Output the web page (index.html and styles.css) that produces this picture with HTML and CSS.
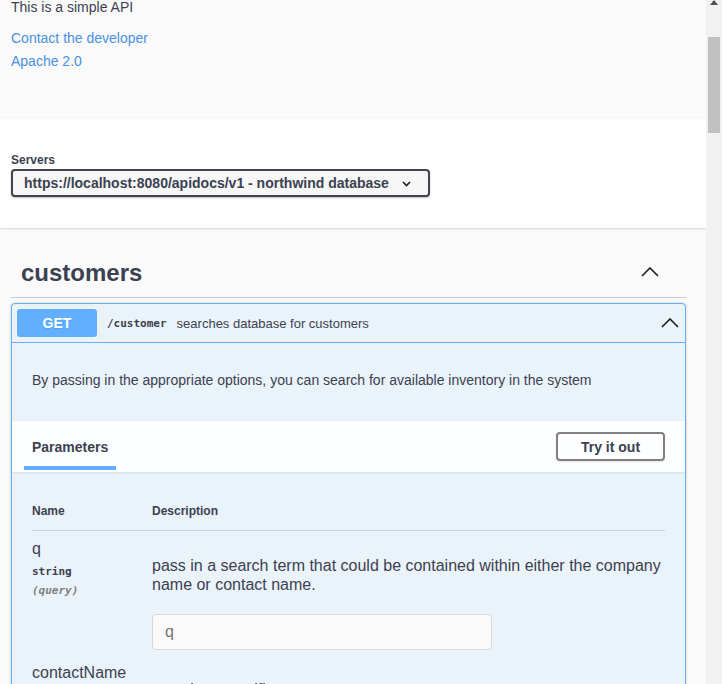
FILE: index.html
```html
<!DOCTYPE html>
<html lang="en">
<head>
<meta charset="utf-8">
<title>Swagger UI</title>
<link rel="stylesheet" href="styles.css">
</head>
<body>
<div class="page">
  <main class="main">
    <section class="info">
      <p class="desc">This is a simple API</p>
      <a class="link link-first" href="#">Contact the developer</a>
      <a class="link link-second" href="#">Apache 2.0</a>
    </section>

    <section class="schemes">
      <label class="servers-label">Servers</label>
      <div class="select">
        <span class="select-text">https://localhost:8080/apidocs/v1 - northwind database</span>
        <svg class="select-arrow" width="9" height="6" viewBox="0 0 9 6"><polyline points="1,1 4.5,4.5 8,1" fill="none" stroke="#1b1b1b" stroke-width="1.6"/></svg>
      </div>
    </section>

    <section class="tag-section">
      <div class="tag-head">
        <h3 class="tag-title">customers</h3>
        <svg class="chevron" width="18" height="10" viewBox="0 0 18 10"><polyline points="1,9 9,1 17,9" fill="none" stroke="#1b1b1b" stroke-width="1.6"/></svg>
      </div>

      <div class="opblock">
        <div class="summary">
          <span class="method">GET</span>
          <span class="path">/customer</span>
          <span class="summary-desc">searches database for customers</span>
          <svg class="chevron summary-chevron" width="18" height="10" viewBox="0 0 18 10"><polyline points="1,9 9,1 17,9" fill="none" stroke="#1b1b1b" stroke-width="1.6"/></svg>
        </div>

        <div class="op-desc">
          <p>By passing in the appropriate options, you can search for available inventory in the system</p>
        </div>

        <div class="tab-header">
          <span class="tab-item">Parameters</span>
          <button class="try-btn">Try it out</button>
        </div>

        <div class="params">
          <div class="params-head">
            <div class="col-name">Name</div>
            <div class="col-desc">Description</div>
          </div>

          <div class="param-row">
            <div class="col-name">
              <div class="param-name">q</div>
              <div class="param-type">string</div>
              <div class="param-in">(query)</div>
            </div>
            <div class="col-desc">
              <p class="param-text">pass in a search term that could be contained within either the company name or contact name.</p>
              <input class="param-input" type="text" placeholder="q">
            </div>
          </div>

          <div class="param-row param-row-next">
            <div class="col-name">
              <div class="param-name">contactName</div>
            </div>
            <div class="col-desc">
              <p class="param-text">pass in a specific contact name</p>
            </div>
          </div>
        </div>
      </div>
    </section>
  </main>

  <div class="scrollbar">
    <svg class="scroll-arrow" width="8" height="5" viewBox="0 0 8 5"><polygon points="4,0 8,5 0,5" fill="#505050"/></svg>
    <div class="scroll-thumb"></div>
  </div>
</div>
</body>
</html>
```

FILE: styles.css
```css
html, body {
  margin: 0;
  padding: 0;
  height: 684px;
  overflow: hidden;
}

body {
  background: #fafafa;
  font-family: "Liberation Sans", Arial, sans-serif;
  color: #3b4151;
}

.page {
  display: flex;
  height: 684px;
}

.main {
  width: 706px;
  height: 684px;
  overflow: hidden;
  flex: none;
}

/* info */
.info {
  height: 119px;
  box-sizing: border-box;
  padding-left: 11px;
  display: flex;
  flex-direction: column;
  align-items: flex-start;
}

.desc {
  margin: -1px 0 0;
  font-size: 14px;
  line-height: 16px;
}

.link {
  font-size: 14px;
  line-height: 16px;
  color: #4990e2;
  text-decoration: none;
}

.link-first { margin-top: 15px; }
.link-second { margin-top: 7px; }

/* servers */
.schemes {
  position: relative;
  height: 109px;
  box-sizing: border-box;
  padding: 34px 0 0 11px;
  background: #fff;
  box-shadow: 0 1px 2px 0 rgba(0, 0, 0, 0.15);
}

.servers-label {
  display: block;
  font-size: 12px;
  font-weight: bold;
  line-height: 14px;
  margin-bottom: 2px;
}

.select {
  width: 419px;
  height: 28px;
  box-sizing: border-box;
  border: 2px solid #41444e;
  border-radius: 4px;
  background: #f7f7f7;
  box-shadow: 0 1px 2px 0 rgba(0, 0, 0, 0.25);
  display: flex;
  align-items: center;
  padding: 0 17px 0 11px;
  font-size: 14px;
  font-weight: bold;
  color: #3b4151;
}

.select-arrow {
  margin-left: auto;
  margin-top: 1px;
}

/* tag */
.tag-section {
  padding: 20px 20px 0 11px;
}

.tag-head {
  height: 49px;
  border-bottom: 1px solid #c9cbd0;
  display: flex;
  align-items: center;
  padding: 0 27px 0 10px;
  margin-bottom: 5px;
}

.tag-title {
  margin: 0;
  font-size: 24px;
  font-weight: bold;
  line-height: 28px;
}

.chevron {
  margin-left: auto;
  margin-top: -2px;
}

/* opblock */
.opblock {
  border: 1px solid #61affe;
  border-radius: 4px;
  background: #ebf3fa;
  box-shadow: 0 0 3px rgba(0, 0, 0, 0.19);
}

.summary {
  height: 38px;
  border-bottom: 1px solid #61affe;
  display: flex;
  align-items: center;
  padding: 0 6px 0 5px;
}

.method {
  width: 80px;
  height: 28px;
  background: #61affe;
  border-radius: 3px;
  color: #fff;
  font-weight: bold;
  font-size: 14px;
  display: flex;
  align-items: center;
  justify-content: center;
  text-shadow: 0 1px 0 rgba(0, 0, 0, 0.1);
}

.path {
  margin-left: 10px;
  font-family: "DejaVu Sans Mono", "Liberation Mono", monospace;
  font-size: 11px;
  font-weight: 600;
  color: #3b4151;
}

.summary-desc {
  margin-left: 10px;
  font-size: 13px;
  color: #3b4151;
}

.summary-chevron {
  margin-top: -1px;
}

.op-desc {
  padding: 29px 20px 32px;
}

.op-desc p {
  margin: 0;
  font-size: 14px;
  line-height: 17px;
}

.tab-header {
  height: 51px;
  background: rgba(255, 255, 255, 0.85);
  box-shadow: 0 1px 2px rgba(0, 0, 0, 0.1);
  display: flex;
  align-items: center;
  padding: 0 20px;
}

.tab-item {
  position: relative;
  font-size: 14px;
  font-weight: bold;
  line-height: 16px;
  margin-top: 1px;
}

.tab-item::after {
  content: "";
  position: absolute;
  left: -8px;
  right: -8px;
  top: 27px;
  height: 4px;
  background: #61affe;
}

.try-btn {
  margin-left: auto;
  width: 109px;
  height: 29px;
  box-sizing: border-box;
  border: 2px solid #808080;
  border-radius: 4px;
  background: transparent;
  font-family: "Liberation Sans", Arial, sans-serif;
  font-size: 14px;
  font-weight: bold;
  color: #3b4151;
  box-shadow: 0 1px 2px rgba(0, 0, 0, 0.1);
  padding: 0;
}

/* params */
.params {
  padding: 32px 20px 0;
}

.params-head {
  display: grid;
  grid-template-columns: 120px 1fr;
  font-size: 12px;
  font-weight: bold;
  line-height: 14px;
  padding-bottom: 12px;
  border-bottom: 1px solid #cbd2dc;
}

.param-row {
  display: grid;
  grid-template-columns: 120px 1fr;
  padding-top: 9px;
}

.param-row-next {
  padding-top: 14px;
}

.param-name {
  font-size: 16px;
  line-height: 18px;
}

.param-type {
  margin-top: 7px;
  font-family: "DejaVu Sans Mono", "Liberation Mono", monospace;
  font-size: 11px;
  font-weight: 600;
  line-height: 14px;
}

.param-in {
  margin-top: 5px;
  font-family: "DejaVu Sans Mono", "Liberation Mono", monospace;
  font-size: 11px;
  font-weight: 600;
  font-style: italic;
  line-height: 14px;
  color: #808080;
}

.param-text {
  margin: 16px 0 0;
  font-size: 16px;
  line-height: 19px;
}

.param-input {
  display: block;
  margin-top: 20px;
  width: 340px;
  height: 36px;
  box-sizing: border-box;
  border: 1px solid #d9d9d9;
  border-radius: 4px;
  background: #fafafa;
  padding: 0 12px;
  font-family: "Liberation Sans", Arial, sans-serif;
  font-size: 16px;
  color: #3b4151;
}

.param-input::placeholder {
  color: #757575;
}

/* scrollbar */
.scrollbar {
  width: 16px;
  flex: none;
  background: #f1f1f1;
  display: flex;
  flex-direction: column;
  align-items: center;
}

.scroll-arrow {
  margin-top: 0;
}

.scroll-thumb {
  margin-top: 32px;
  width: 12px;
  height: 96px;
  background: #c1c1c1;
}
```
